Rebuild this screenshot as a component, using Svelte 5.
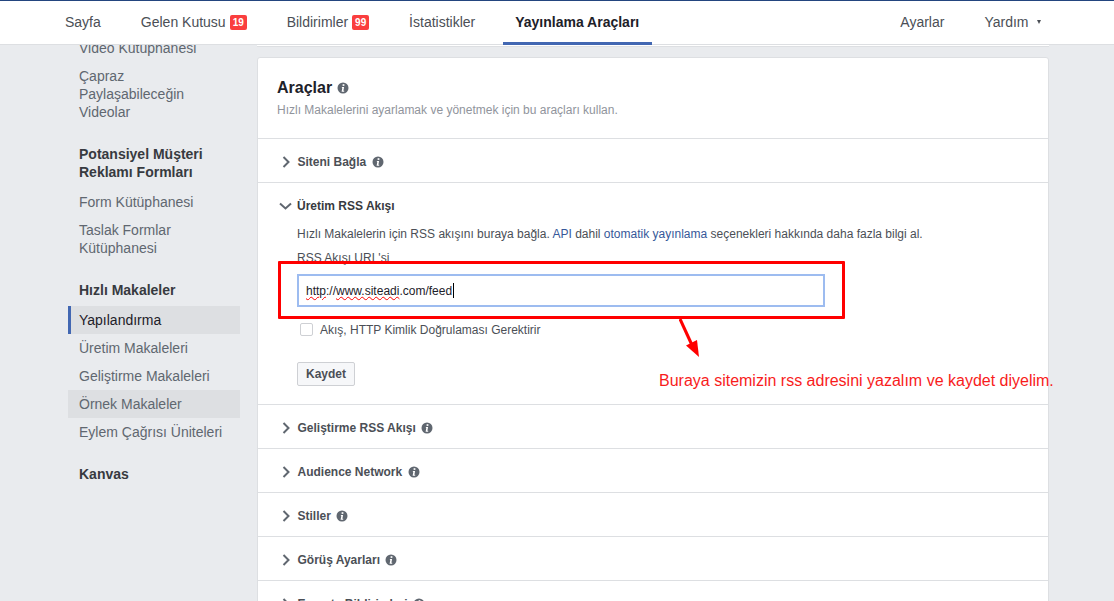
<script lang="ts">
  const tabs = [
    { label: "Sayfa" },
    { label: "Gelen Kutusu", badge: "19" },
    { label: "Bildirimler", badge: "99" },
    { label: "İstatistikler" },
    { label: "Yayınlama Araçları", active: true }
  ];
  const before = [{ label: "Siteni Bağla" }];
  const after = [
    { label: "Geliştirme RSS Akışı" },
    { label: "Audience Network" },
    { label: "Stiller" },
    { label: "Görüş Ayarları" },
    { label: "E-posta Bildirimleri" }
  ];
</script>

{#snippet info()}
  <svg class="info" width="12" height="12" viewBox="0 0 12 12" aria-hidden="true">
    <circle cx="6" cy="6" r="5.5" fill="#606770" />
    <rect x="5.6" y="2.2" width="1.8" height="1.7" fill="#fff" />
    <path d="M4.9 5.1h2.2L6.4 8.7h.8v1H4.6L5.3 6H4.9z" fill="#fff" />
  </svg>
{/snippet}

{#snippet row(item)}
  <div class="row">
    <svg class="chev" width="8" height="12" viewBox="0 0 8 12" aria-hidden="true">
      <path d="M1.5 1l5 5-5 5" fill="none" stroke="#606770" stroke-width="2" />
    </svg>
    <span class="row-label">{item.label}</span>
    {@render info()}
  </div>
{/snippet}

<div class="page">
  <nav class="nav">
    {#each tabs as t}
      <a class="tab" class:active={t.active}>
        {t.label}
        {#if t.badge}<span class="badge">{t.badge}</span>{/if}
      </a>
    {/each}
    <span class="spacer"></span>
    <a class="tab">Ayarlar</a>
    <a class="tab last">Yardım <span class="caret"></span></a>
  </nav>

  <div class="content">
    <aside class="side">
      <div class="side-inner">
        <div class="item">Video Kütüphanesi</div>
        <div class="item">Çapraz Paylaşabileceğin Videolar</div>
        <h4>Potansiyel Müşteri Reklamı Formları</h4>
        <div class="item">Form Kütüphanesi</div>
        <div class="item">Taslak Formlar Kütüphanesi</div>
        <h4>Hızlı Makaleler</h4>
        <div class="item current">Yapılandırma</div>
        <div class="item">Üretim Makaleleri</div>
        <div class="item">Geliştirme Makaleleri</div>
        <div class="item hover">Örnek Makaleler</div>
        <div class="item">Eylem Çağrısı Üniteleri</div>
        <h4>Kanvas</h4>
      </div>
    </aside>

    <main class="main">
      <div class="prev-card"></div>
      <section class="card">
        <header class="card-head">
          <h2>Araçlar {@render info()}</h2>
          <p>Hızlı Makalelerini ayarlamak ve yönetmek için bu araçları kullan.</p>
        </header>

        {#each before as item}
          {@render row(item)}
        {/each}

        <div class="open">
          <div class="open-title">
            <svg class="chev-down" width="13" height="8" viewBox="0 0 13 8" aria-hidden="true">
              <path d="M1 1.5l5.5 5 5.5-5" fill="none" stroke="#606770" stroke-width="2" />
            </svg>
            <span>Üretim RSS Akışı</span>
          </div>
          <p class="desc">
            Hızlı Makalelerin için RSS akışını buraya bağla. <span class="lnk">API</span> dahil
            <span class="lnk">otomatik yayınlama</span> seçenekleri hakkında daha fazla bilgi al.
          </p>
          <div class="field-label">RSS Akışı URL'si</div>
          <div class="input">
            <span class="wavy">http</span>://<span class="wavy">www.siteadi</span>.com/feed<span class="cursor"></span>
          </div>
          <label class="check">
            <span class="box"></span>
            Akış, HTTP Kimlik Doğrulaması Gerektirir
          </label>
          <button class="save">Kaydet</button>
        </div>

        {#each after as item}
          {@render row(item)}
        {/each}
      </section>
    </main>
  </div>

  <!-- annotation drawn on top of the screenshot -->
  <div class="mark"></div>
  <svg class="arrow" width="30" height="44" viewBox="0 0 30 44" aria-hidden="true">
    <path d="M1 1l11.5 25" stroke="#f00" stroke-width="3" fill="none" />
    <path d="M20 39L7 27.5 18 22z" fill="#f00" />
  </svg>
  <div class="note">Buraya sitemizin rss adresini yazalım ve kaydet diyelim.</div>
</div>

<style>
  :global(body) {
    margin: 0;
    background: #e9ebee;
  }
  .page {
    position: relative;
    height: 601px;
    overflow: hidden;
    background: #e9ebee;
    font-family: "Liberation Sans", Arial, sans-serif;
    color: #4b4f56;
    display: flex;
    flex-direction: column;
  }
  .nav {
    flex: none;
    box-sizing: border-box;
    background: #fff;
    border-top: 1px solid #23457f;
    border-bottom: 1px solid #dddfe2;
    height: 45px;
    padding-left: 53px;
    padding-right: 61.5px;
    display: flex;
    align-items: stretch;
    font-size: 14px;
    position: relative;
    z-index: 2;
  }
  .tab {
    display: flex;
    align-items: center;
    gap: 4px;
    padding: 0 12px 2px;
    margin-right: 16px;
    color: #4b4f56;
    box-sizing: border-box;
  }
  .tab.active {
    color: #1d2129;
    font-weight: bold;
    border-bottom: 3px solid #4267b2;
    padding: 0 13px 0 12px;
    margin-bottom: -1px;
  }
  .tab.last {
    margin-right: 0;
    gap: 8px;
  }
  .spacer {
    flex: 1;
  }
  .badge {
    background: #fa3e3e;
    color: #fff;
    font-size: 10px;
    font-weight: bold;
    border-radius: 2px;
    padding: 0 3px;
    height: 15px;
    width: 17px;
    box-sizing: border-box;
    line-height: 15px;
    text-align: center;
    margin-top: 1px;
  }
  .caret {
    width: 0;
    height: 0;
    border-left: 2.5px solid transparent;
    border-right: 2.5px solid transparent;
    border-top: 4px solid #4b4f56;
  }
  .content {
    flex: 1;
    display: flex;
    min-height: 0;
  }
  .side {
    flex: none;
    width: 240px;
    overflow: hidden;
  }
  .side-inner {
    margin-top: -11px;
    padding-left: 68px;
    font-size: 14px;
    line-height: 18px;
  }
  .item {
    padding: 5px 11px;
    color: #606770;
  }
  .item.current {
    background: #dddfe2;
    box-shadow: inset 3px 0 0 #4267b2;
    color: #1d2129;
  }
  .item.hover {
    background: #dddfe2;
  }
  h4 {
    margin: 19px 0 7px;
    padding-left: 11px;
    padding-right: 11px;
    font-size: 14px;
    line-height: 18px;
    font-weight: bold;
    color: #373a40;
  }
  .main {
    flex: none;
    width: 792px;
    margin-left: 17px;
  }
  .prev-card {
    height: 0;
    border-bottom: 1px solid #dddfe2;
    padding-bottom: 1px;
    background: #fff;
  }
  .card {
    margin-top: 10px;
    background: #fff;
    border: 1px solid #dddfe2;
    border-radius: 3px;
    font-size: 12px;
  }
  .card-head {
    padding: 20px 19px 0;
    height: 60px;
  }
  h2 {
    margin: 0;
    font-size: 16px;
    line-height: 20px;
    font-weight: bold;
    color: #1d2129;
    display: flex;
    align-items: center;
    gap: 5px;
  }
  .card-head p {
    margin: 4px 0 0;
    line-height: 16px;
    color: #90949c;
  }
  .row {
    height: 44px;
    box-sizing: border-box;
    border-top: 1px solid #dddfe2;
    display: flex;
    align-items: center;
    padding: 2px 0 0 24px;
  }
  .chev {
    flex: none;
    margin-right: 7.5px;
  }
  .row-label {
    font-weight: bold;
    color: #4b4f56;
    margin-right: 5.5px;
  }
  .open {
    border-top: 1px solid #dddfe2;
    height: 222px;
    box-sizing: border-box;
    padding: 15px 0 0 21px;
  }
  .open-title {
    display: flex;
    align-items: center;
    gap: 5px;
    height: 16px;
    font-weight: bold;
    color: #373a40;
  }
  .desc {
    margin: 12px 0 0 18px;
    line-height: 16px;
    color: #4b4f56;
  }
  .lnk {
    color: #365899;
  }
  .field-label {
    margin: 8px 0 0 18px;
    line-height: 16px;
    color: #4b4f56;
  }
  .input {
    margin: 8px 0 0 18px;
    width: 528px;
    height: 33px;
    box-sizing: border-box;
    border: 2px solid #9dbcf0;
    padding-left: 7px;
    line-height: 28px;
    color: #1d2129;
    display: flex;
    align-items: center;
  }
  .wavy {
    text-decoration: underline wavy #f00 1px;
    text-underline-offset: 1px;
  }
  .cursor {
    width: 1px;
    height: 15px;
    background: #000;
    margin-left: 1px;
  }
  .check {
    margin: 15px 0 0 21px;
    display: flex;
    align-items: center;
    gap: 7px;
    height: 15px;
    color: #4b4f56;
  }
  .box {
    width: 13px;
    height: 13px;
    border: 1px solid #ced0d4;
    border-radius: 2px;
    background: #fff;
    box-sizing: border-box;
  }
  .save {
    display: block;
    margin: 25px 0 0 18px;
    width: 58px;
    height: 24px;
    padding: 0;
    background: #f6f7f9;
    border: 1px solid #ced0d4;
    border-radius: 2px;
    font: bold 12px "Liberation Sans", Arial, sans-serif;
    color: #4b4f56;
  }
  .mark {
    position: absolute;
    left: 278px;
    top: 261px;
    width: 567px;
    height: 58px;
    box-sizing: border-box;
    border: 3px solid #f00;
    border-radius: 1px;
  }
  .arrow {
    position: absolute;
    left: 679px;
    top: 318px;
  }
  .note {
    position: absolute;
    left: 659px;
    top: 372px;
    font-size: 16px;
    line-height: 18px;
    color: #f81c1c;
    white-space: nowrap;
  }
</style>
